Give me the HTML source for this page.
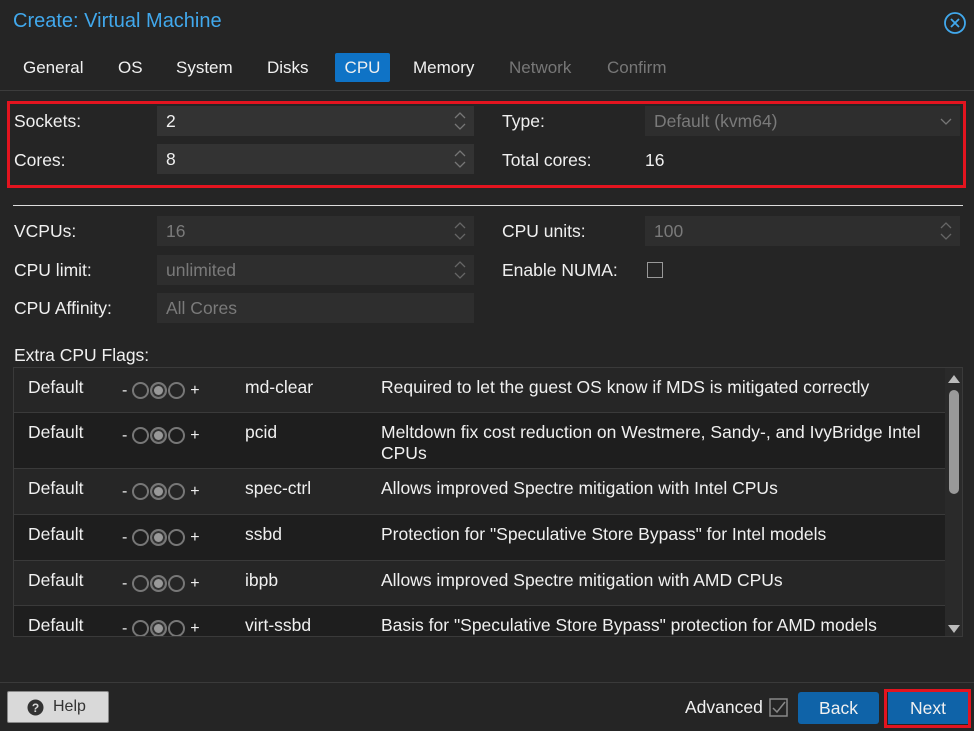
<!DOCTYPE html><html><head><style>
body{margin:0;width:974px;height:731px;background:#252525;font-family:"Liberation Sans",sans-serif;color:#f0f0f0;font-size:17.5px;position:relative;overflow:hidden}
.a{position:absolute;white-space:nowrap}
.in{position:absolute;background:#333;height:30px;line-height:30px;padding-left:9px;box-sizing:border-box}
.dis{color:#7a7a7a;background:#2e2e2e}
.sp{position:absolute;right:8px;top:4px;width:12px;height:22px}
.row{position:absolute;left:0;width:931px;border-bottom:1px solid #3a3a3a}
.tg{position:absolute;left:108px;top:14px;font-size:16px}
.c{display:inline-block;width:17px;height:17px;border:2px solid #777;border-radius:50%;box-sizing:border-box;vertical-align:middle;margin:0 0.5px}
.c.on{background:#999;box-shadow:inset 0 0 0 2px #333}
.tab{font-size:17px}
</style></head><body>
<div class="a" style="left:13px;top:10px;font-size:20px;color:#41a8ec">Create: Virtual Machine</div>
<svg class="a" style="left:943px;top:11px" width="24" height="24"><circle cx="12" cy="12" r="10" fill="none" stroke="#41a8ec" stroke-width="1.8"/><path d="M8 8L16 16M16 8L8 16" stroke="#41a8ec" stroke-width="1.8"/></svg>
<div class="a tab" style="left:23px;top:58px">General</div>
<div class="a tab" style="left:118px;top:58px">OS</div>
<div class="a tab" style="left:176px;top:58px">System</div>
<div class="a tab" style="left:267px;top:58px">Disks</div>
<div class="a tab" style="left:335px;top:53px;width:55px;height:29px;background:#0f73c6;border-radius:2px;text-align:center;line-height:29px">CPU</div>
<div class="a tab" style="left:413px;top:58px">Memory</div>
<div class="a tab" style="left:509px;top:58px;color:#777">Network</div>
<div class="a tab" style="left:607px;top:58px;color:#777">Confirm</div>
<div class="a" style="left:0;top:90px;width:974px;height:1px;background:#3c3c3c"></div>
<div class="a" style="left:7px;top:101px;width:953px;height:81px;border:3px solid #e3141f"></div>
<div class="a" style="left:14px;top:111px">Sockets:</div>
<div class="in" style="left:157px;top:106px;width:317px">2<svg class="sp" viewBox="0 0 12 22"><path d="M1 8L6 3L11 8M1 14L6 19L11 14" fill="none" stroke="#777" stroke-width="1.3"/></svg></div>
<div class="a" style="left:14px;top:150px">Cores:</div>
<div class="in" style="left:157px;top:144px;width:317px">8<svg class="sp" viewBox="0 0 12 22"><path d="M1 8L6 3L11 8M1 14L6 19L11 14" fill="none" stroke="#777" stroke-width="1.3"/></svg></div>
<div class="a" style="left:502px;top:111px">Type:</div>
<div class="in dis" style="left:645px;top:106px;width:315px">Default (kvm64)<svg class="sp" viewBox="0 0 12 22"><path d="M1 9L6 14L11 9" fill="none" stroke="#777" stroke-width="1.3"/></svg></div>
<div class="a" style="left:502px;top:150px">Total cores:</div>
<div class="a" style="left:645px;top:150px">16</div>
<div class="a" style="left:13px;top:205px;width:950px;height:1px;background:#ddd"></div>
<div class="a" style="left:14px;top:221px">VCPUs:</div>
<div class="in dis" style="left:157px;top:216px;width:317px">16<svg class="sp" viewBox="0 0 12 22"><path d="M1 8L6 3L11 8M1 14L6 19L11 14" fill="none" stroke="#666" stroke-width="1.3"/></svg></div>
<div class="a" style="left:14px;top:260px">CPU limit:</div>
<div class="in dis" style="left:157px;top:255px;width:317px">unlimited<svg class="sp" viewBox="0 0 12 22"><path d="M1 8L6 3L11 8M1 14L6 19L11 14" fill="none" stroke="#666" stroke-width="1.3"/></svg></div>
<div class="a" style="left:14px;top:298px">CPU Affinity:</div>
<div class="in dis" style="left:157px;top:293px;width:317px">All Cores</div>
<div class="a" style="left:502px;top:221px">CPU units:</div>
<div class="in dis" style="left:645px;top:216px;width:315px">100<svg class="sp" viewBox="0 0 12 22"><path d="M1 8L6 3L11 8M1 14L6 19L11 14" fill="none" stroke="#666" stroke-width="1.3"/></svg></div>
<div class="a" style="left:502px;top:260px">Enable NUMA:</div>
<div class="a" style="left:647px;top:262px;width:14px;height:14px;border:1.5px solid #999"></div>
<div class="a" style="left:14px;top:345px">Extra CPU Flags:</div>
<div class="a" style="left:13px;top:367px;width:950px;height:270px;border:1px solid #3a3a3a;box-sizing:border-box;overflow:hidden;background:#222">
<div class="row" style="top:0;height:44px;background:#262626"><div class="a" style="left:14px;top:9px">Default</div><div class="tg">- <span class="c"></span><span class="c on"></span><span class="c"></span> +</div><div class="a" style="left:231px;top:9px">md-clear</div><div class="a" style="left:367px;top:9px">Required to let the guest OS know if MDS is mitigated correctly</div></div>
<div class="row" style="top:45px;height:55px;background:#1e1e1e"><div class="a" style="left:14px;top:9px">Default</div><div class="tg">- <span class="c"></span><span class="c on"></span><span class="c"></span> +</div><div class="a" style="left:231px;top:9px">pcid</div><div class="a" style="left:367px;top:9px;line-height:21px">Meltdown fix cost reduction on Westmere, Sandy-, and IvyBridge Intel<br>CPUs</div></div>
<div class="row" style="top:101px;height:45px;background:#262626"><div class="a" style="left:14px;top:9px">Default</div><div class="tg">- <span class="c"></span><span class="c on"></span><span class="c"></span> +</div><div class="a" style="left:231px;top:9px">spec-ctrl</div><div class="a" style="left:367px;top:9px">Allows improved Spectre mitigation with Intel CPUs</div></div>
<div class="row" style="top:147px;height:45px;background:#1e1e1e"><div class="a" style="left:14px;top:9px">Default</div><div class="tg">- <span class="c"></span><span class="c on"></span><span class="c"></span> +</div><div class="a" style="left:231px;top:9px">ssbd</div><div class="a" style="left:367px;top:9px">Protection for "Speculative Store Bypass" for Intel models</div></div>
<div class="row" style="top:193px;height:44px;background:#262626"><div class="a" style="left:14px;top:9px">Default</div><div class="tg">- <span class="c"></span><span class="c on"></span><span class="c"></span> +</div><div class="a" style="left:231px;top:9px">ibpb</div><div class="a" style="left:367px;top:9px">Allows improved Spectre mitigation with AMD CPUs</div></div>
<div class="row" style="top:238px;height:45px;background:#1e1e1e"><div class="a" style="left:14px;top:9px">Default</div><div class="tg">- <span class="c"></span><span class="c on"></span><span class="c"></span> +</div><div class="a" style="left:231px;top:9px">virt-ssbd</div><div class="a" style="left:367px;top:9px">Basis for "Speculative Store Bypass" protection for AMD models</div></div>
<div class="a" style="left:931px;top:0;width:18px;height:270px;background:#2a2a2a"></div>
<svg class="a" style="left:934px;top:6px" width="12" height="10"><path d="M0 9L6 1L12 9Z" fill="#bbb"/></svg>
<div class="a" style="left:935px;top:22px;width:10px;height:104px;background:#999;border-radius:5px"></div>
<svg class="a" style="left:934px;top:256px" width="12" height="10"><path d="M0 1L6 9L12 1Z" fill="#bbb"/></svg>
</div>
<div class="a" style="left:0;top:682px;width:974px;height:1px;background:#3a3a3a"></div>
<div class="a" style="left:7px;top:691px;width:102px;height:32px;background:#d9d9d9;border:1px solid #888;box-sizing:border-box;border-radius:2px;color:#333;line-height:30px;font-size:16px"><svg style="position:absolute;left:19px;top:7px" width="17" height="17"><circle cx="8.5" cy="8.5" r="8" fill="#333"/><text x="8.5" y="13" font-size="12" font-weight="bold" fill="#d9d9d9" text-anchor="middle" font-family="Liberation Sans">?</text></svg><span style="position:absolute;left:45px">Help</span></div>
<div class="a" style="left:685px;top:697px">Advanced</div>
<svg class="a" style="left:769px;top:698px" width="19" height="19"><rect x="1" y="1" width="17" height="17" fill="none" stroke="#888" stroke-width="1.5"/><path d="M4 10L8 14L16 4" fill="none" stroke="#888" stroke-width="1.5"/></svg>
<div class="a" style="left:798px;top:692px;width:81px;height:32px;background:#0f63a8;border-radius:3px;text-align:center;line-height:32px">Back</div>
<div class="a" style="left:884px;top:689px;width:87px;height:39px;border:3px solid #e3141f;box-sizing:border-box"></div>
<div class="a" style="left:888px;top:692px;width:80px;height:32px;background:#0f63a8;text-align:center;line-height:32px">Next</div>
</body></html>
